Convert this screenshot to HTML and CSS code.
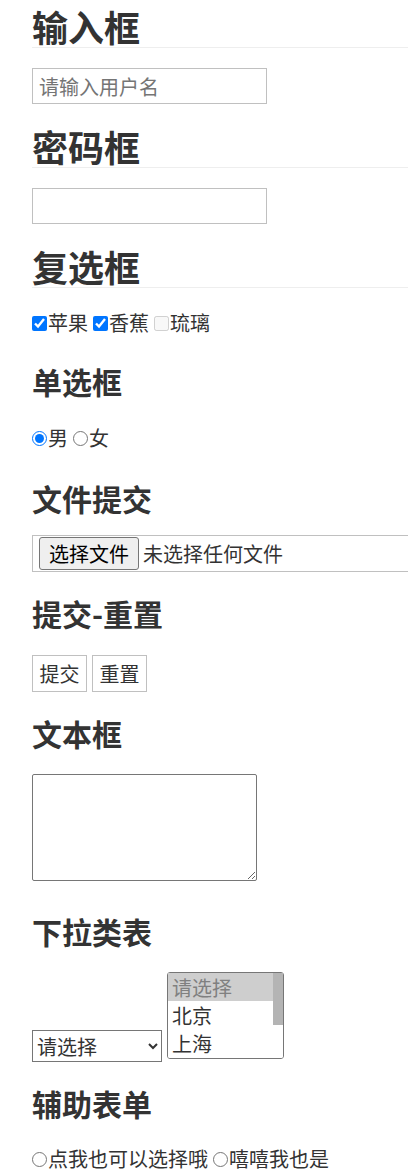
FILE: index.html
```html
<!DOCTYPE html>
<html lang="zh-CN">
<head>
<meta charset="utf-8">
<title>表单</title>
<link rel="stylesheet" href="styles.css">
</head>
<body>
<form class="page">
  <h1 class="h1 h1-first">输入框</h1>
  <input class="text-input" type="text" placeholder="请输入用户名">

  <h1 class="h1">密码框</h1>
  <input class="text-input" type="password">

  <h1 class="h1">复选框</h1>
  <div class="row row-check">
    <label class="opt"><input class="box" type="checkbox" checked>苹果</label>
    <label class="opt"><input class="box" type="checkbox" checked>香蕉</label>
    <label class="opt"><input class="box" type="checkbox" disabled>琉璃</label>
  </div>

  <h2 class="h2 h2-radio">单选框</h2>
  <div class="row row-radio">
    <label class="opt"><input class="box" type="radio" name="sex" checked>男</label>
    <label class="opt"><input class="box" type="radio" name="sex">女</label>
  </div>

  <h2 class="h2 h2-after-row">文件提交</h2>
  <div class="file-box">
    <label class="file-btn"><input class="file-hidden" type="file">选择文件</label>
    <span class="file-name">未选择任何文件</span>
  </div>

  <h2 class="h2 h2-after-box">提交-重置</h2>
  <div class="btn-row">
    <button class="btn" type="submit">提交</button>
    <button class="btn" type="reset">重置</button>
  </div>

  <h2 class="h2 h2-after-box">文本框</h2>
  <textarea class="area"></textarea>

  <h2 class="h2 h2-after-area">下拉类表</h2>
  <div class="select-row">
    <select class="drop">
      <option>请选择</option>
      <option>北京</option>
      <option>上海</option>
    </select>
    <div class="list-wrap">
      <select class="list" size="3">
        <option selected>请选择</option>
        <option>北京</option>
        <option>上海</option>
        <option>广州</option>
        <option>深圳</option>
      </select>
      <span class="list-thumb"></span>
    </div>
  </div>

  <h2 class="h2 h2-after-box">辅助表单</h2>
  <div class="row row-last">
    <label class="opt" for="r1"><input class="box" id="r1" type="radio" name="aux">点我也可以选择哦</label>
    <label class="opt" for="r2"><input class="box" id="r2" type="radio" name="aux">嘻嘻我也是</label>
  </div>
</form>
</body>
</html>
```

FILE: styles.css
```css
html, body {
  margin: 0;
  padding: 0;
  background: #fff;
  overflow-x: hidden;
}

body {
  font-family: "Noto Sans CJK SC", "Microsoft YaHei", sans-serif;
  font-size: 20px;
  color: #333;
}

.page {
  padding: 8px 0 0 32px;
  margin: 0;
}

.h1 {
  margin: 24px 0 0;
  font-size: 36px;
  line-height: 36px;
  font-weight: 700;
  color: #333;
  padding-bottom: 3px;
  border-bottom: 1px solid #eee;
}

.h1-first {
  margin-top: 0;
}

.h2 {
  margin: 0;
  font-size: 30px;
  line-height: 30px;
  font-weight: 700;
  color: #333;
}

.h2-radio { margin-top: 33px; }
.h2-after-row { margin-top: 35px; }
.h2-after-box { margin-top: 26px; }
.h2-after-area { margin-top: 35px; }

.text-input {
  display: block;
  box-sizing: border-box;
  width: 235px;
  height: 36px;
  margin: 20px 0 0;
  padding: 0 6px;
  border: 1px solid #c0c0c0;
  border-radius: 0;
  outline: none;
  font-family: inherit;
  font-size: 20px;
  color: #333;
}

.text-input::placeholder {
  color: #757575;
}

.row {
  display: flex;
  align-items: center;
  gap: 5px;
  height: 20px;
  line-height: 20px;
}

.row-check { margin-top: 25px; }
.row-radio { margin-top: 32px; }
.row-last { margin-top: 31px; }

.opt {
  display: inline-flex;
  align-items: center;
  gap: 1px;
  white-space: nowrap;
}

.box {
  width: 15px;
  height: 15px;
  margin: 0;
  flex: none;
}

.file-box {
  display: flex;
  align-items: center;
  box-sizing: border-box;
  width: 440px;
  height: 37px;
  margin-top: 22px;
  padding: 0 6px;
  border: 1px solid #c0c0c0;
}

.file-btn {
  display: inline-flex;
  align-items: center;
  justify-content: center;
  box-sizing: border-box;
  width: 100px;
  height: 33px;
  margin-right: 4px;
  border: 1px solid #767676;
  border-radius: 3px;
  background: #efefef;
  color: #000;
  line-height: 20px;
}

.file-hidden {
  display: none;
}

.file-name {
  color: #333;
  line-height: 20px;
}

.btn-row {
  display: flex;
  gap: 5px;
  margin-top: 27px;
}

.btn {
  box-sizing: border-box;
  width: 55px;
  height: 37px;
  margin: 0;
  padding: 0;
  border: 1px solid #c0c0c0;
  border-radius: 0;
  background: #fff;
  font-family: inherit;
  font-size: 20px;
  color: #333;
}

.area {
  display: block;
  box-sizing: border-box;
  width: 225px;
  height: 107px;
  margin-top: 26px;
  border: 1px solid #767676;
  border-radius: 2px;
  font-family: inherit;
  font-size: 20px;
}

.select-row {
  display: flex;
  align-items: flex-end;
  gap: 5px;
  margin-top: 26px;
}

.drop {
  box-sizing: border-box;
  width: 130px;
  height: 32px;
  margin: 0;
  border: 1px solid #767676;
  border-radius: 0;
  background: #fff;
  font-family: inherit;
  font-size: 20px;
  color: #333;
}

.list-wrap {
  position: relative;
  margin-bottom: 3px;
}

.list {
  display: block;
  box-sizing: border-box;
  width: 117px;
  height: 87px;
  margin: 0;
  padding: 0;
  border: 1px solid #767676;
  border-radius: 3px;
  font-family: inherit;
  font-size: 20px;
  color: #333;
  overflow-y: scroll;
}

.list option {
  padding: 0 4px;
  line-height: 28px;
  height: 28px;
}

.list option:checked {
  background: #cecece linear-gradient(#cecece, #cecece);
  color: #808080;
}

.list-thumb {
  position: absolute;
  top: 1px;
  right: 1px;
  width: 10px;
  height: 52px;
  background: #b4b4b4;
}
```
